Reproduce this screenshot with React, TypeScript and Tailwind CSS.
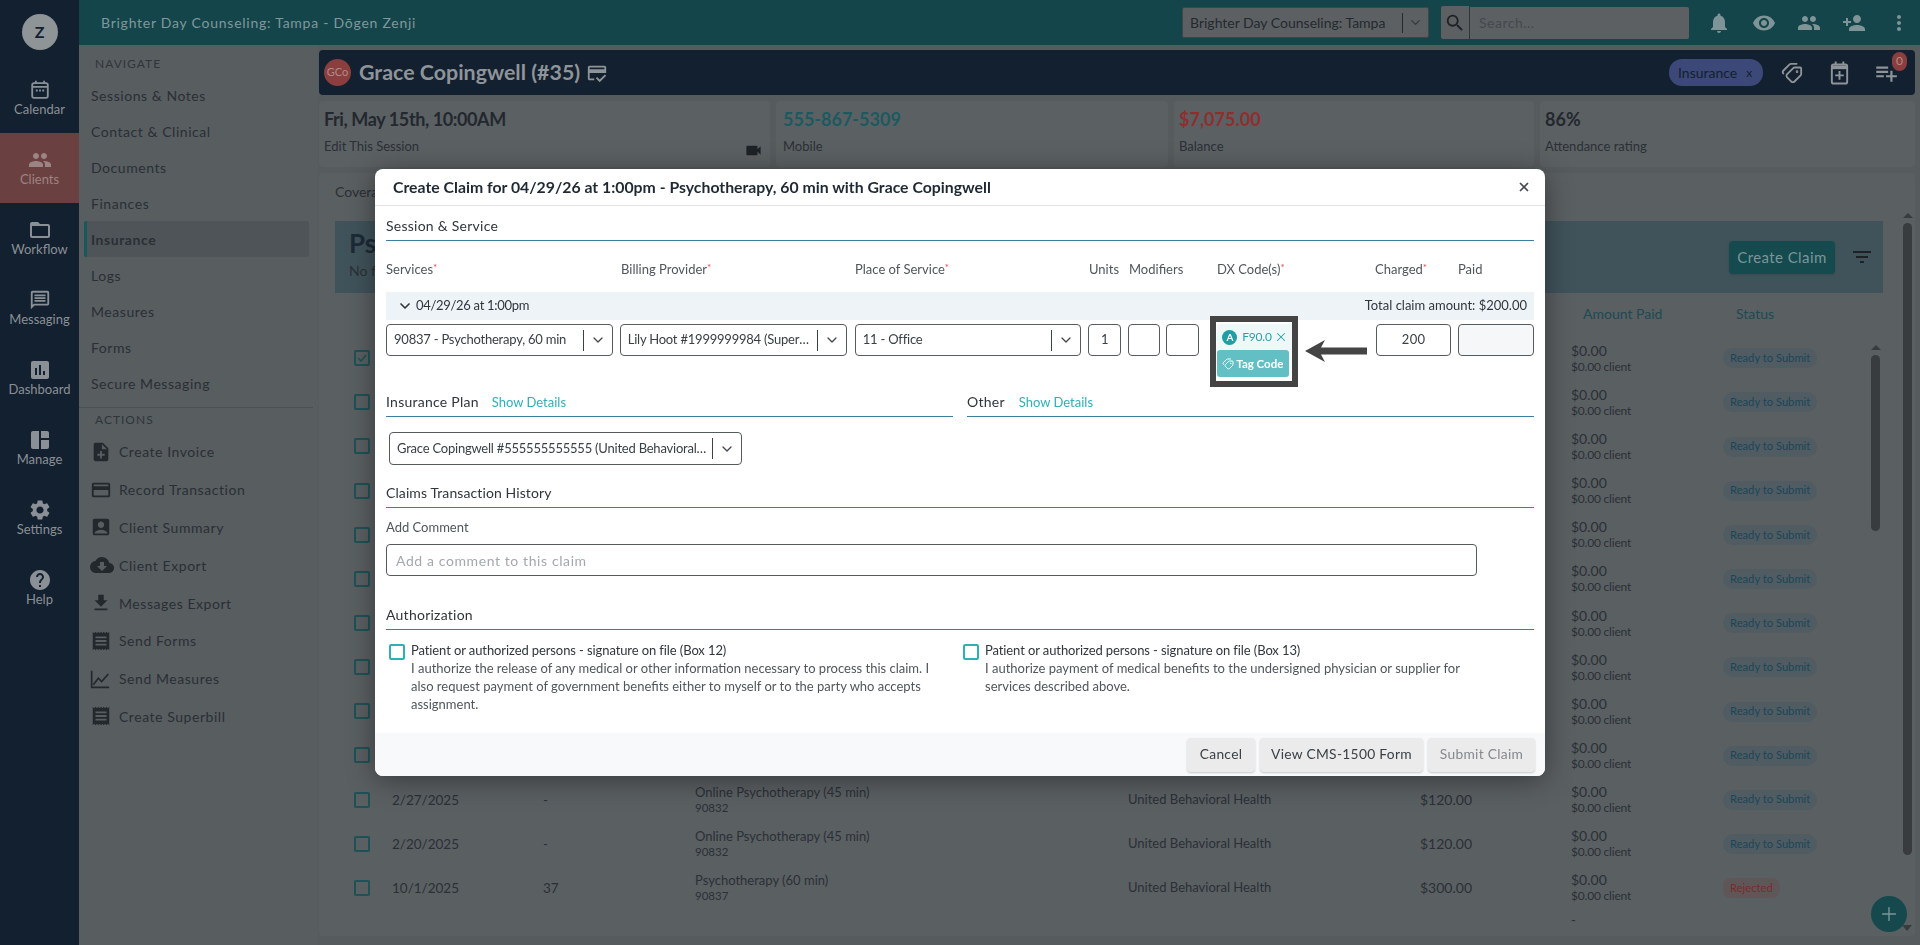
import type { ReactNode } from 'react';
import { ChevronDown, Plus, Tags, X } from 'lucide-react';
import {
    MdAccountBox,
    MdAssessment,
    MdCloudDownload,
    MdCreditCard,
    MdFileDownload,
    MdFilterList,
    MdFolderOpen,
    MdHelp,
    MdMoreVert,
    MdNoteAdd,
    MdNotifications,
    MdOutlineCreditScore,
    MdOutlineMessage,
    MdPeople,
    MdPersonAdd,
    MdPlaylistAdd,
    MdReceipt,
    MdRemoveRedEye,
    MdSearch,
    MdSettings,
    MdSpaceDashboard,
    MdVideocam,
} from 'react-icons/md';

function CalendarIcon() {
    return (
        <svg width="22" height="22" viewBox="0 0 24 24" fill="none" stroke="currentColor" strokeWidth="2">
            <rect x="3.5" y="4.5" width="17" height="16" rx="2" />
            <path d="M3.5 8.5h17M7.5 2v3M16.5 2v3" />
            <path d="M7.5 12.5h2M11 12.5h2M14.5 12.5h2" />
        </svg>
    );
}

function ChartIcon() {
    return (
        <svg width="20" height="20" viewBox="0 0 24 24" fill="none" stroke="currentColor" strokeWidth="2">
            <path d="M2 2v20h21" />
            <path d="M4 19l6-8 4 4 8-9" />
        </svg>
    );
}

function CalendarAddIcon() {
    return (
        <svg width="23" height="26" viewBox="0 0 24 26" fill="none" stroke="#8f9498" strokeWidth="2">
            <rect x="4" y="4" width="16" height="20" rx="2" />
            <path d="M4 7h16" strokeWidth="4" />
            <path d="M8 1v3M16 1v3M12 11v9M7.5 15.5h9" />
        </svg>
    );
}

const railItems = [
    { label: 'Calendar', icon: <CalendarIcon /> },
    { label: 'Clients', icon: <MdPeople size={24} />, active: true },
    { label: 'Workflow', icon: <MdFolderOpen size={24} /> },
    { label: 'Messaging', icon: <MdOutlineMessage size={22} /> },
    { label: 'Dashboard', icon: <MdAssessment size={24} /> },
    { label: 'Manage', icon: <MdSpaceDashboard size={24} /> },
    { label: 'Settings', icon: <MdSettings size={24} /> },
    { label: 'Help', icon: <MdHelp size={24} /> },
];

const navItems = ['Sessions & Notes', 'Contact & Clinical', 'Documents', 'Finances', 'Insurance', 'Logs', 'Measures', 'Forms', 'Secure Messaging'];

const actionItems = [
    { label: 'Create Invoice', icon: <MdNoteAdd size={22} /> },
    { label: 'Record Transaction', icon: <MdCreditCard size={22} /> },
    { label: 'Client Summary', icon: <MdAccountBox size={22} /> },
    { label: 'Client Export', icon: <MdCloudDownload size={24} /> },
    { label: 'Messages Export', icon: <MdFileDownload size={22} /> },
    { label: 'Send Forms', icon: <MdReceipt size={22} /> },
    { label: 'Send Measures', icon: <ChartIcon /> },
    { label: 'Create Superbill', icon: <MdReceipt size={22} /> },
];

const rows = [
    { date: '5/1/2025', session: '41', service: 'Psychotherapy (60 min)', code: '90837', charged: '$200.00', status: 'Ready to Submit', checked: true },
    { date: '4/24/2025', session: '40', service: 'Psychotherapy (60 min)', code: '90837', charged: '$200.00', status: 'Ready to Submit' },
    { date: '4/17/2025', session: '39', service: 'Psychotherapy (60 min)', code: '90837', charged: '$200.00', status: 'Ready to Submit' },
    { date: '4/10/2025', session: '38', service: 'Psychotherapy (60 min)', code: '90837', charged: '$200.00', status: 'Ready to Submit' },
    { date: '4/3/2025', session: '-', service: 'Online Psychotherapy (45 min)', code: '90832', charged: '$120.00', status: 'Ready to Submit' },
    { date: '3/27/2025', session: '-', service: 'Online Psychotherapy (45 min)', code: '90832', charged: '$120.00', status: 'Ready to Submit' },
    { date: '3/20/2025', session: '-', service: 'Online Psychotherapy (45 min)', code: '90832', charged: '$120.00', status: 'Ready to Submit' },
    { date: '3/13/2025', session: '-', service: 'Online Psychotherapy (45 min)', code: '90832', charged: '$120.00', status: 'Ready to Submit' },
    { date: '3/6/2025', session: '-', service: 'Online Psychotherapy (45 min)', code: '90832', charged: '$120.00', status: 'Ready to Submit' },
    { date: '3/4/2025', session: '-', service: 'Online Psychotherapy (45 min)', code: '90832', charged: '$120.00', status: 'Ready to Submit' },
    { date: '2/27/2025', session: '-', service: 'Online Psychotherapy (45 min)', code: '90832', charged: '$120.00', status: 'Ready to Submit' },
    { date: '2/20/2025', session: '-', service: 'Online Psychotherapy (45 min)', code: '90832', charged: '$120.00', status: 'Ready to Submit' },
    { date: '10/1/2025', session: '37', service: 'Psychotherapy (60 min)', code: '90837', charged: '$300.00', status: 'Rejected' },
];

function Rail() {
    return (
        <div className="w-[79px] shrink-0 bg-[#13202f] flex flex-col text-[13px] text-[#8a9096]">
            <div className="h-[63px] pt-[14px] flex justify-center">
                <div className="w-9 h-9 rounded-full bg-[#8f9497] flex items-center justify-center text-[#13202f] font-bold text-[16px]">Z</div>
            </div>
            {railItems.map(item => (
                <div key={item.label} className={`h-[70px] pt-[15px] flex flex-col items-center ${item.active ? 'bg-[#6b4040] text-[#9b8484]' : ''}`}>
                    <div className="h-[24px] flex items-center">{item.icon}</div>
                    <span className="leading-[17px] mt-[-1px]">{item.label}</span>
                </div>
            ))}
        </div>
    );
}

function SideNav() {
    return (
        <div className="w-[239px] shrink-0 bg-[#585d60] pt-[45px] text-[14px] tracking-[0.55px] text-[#2a2f35]">
            <div className="pl-[16px] h-[32px] pt-[10px] text-[12px] tracking-[1px] text-[#2f353b]">NAVIGATE</div>
            <div className="pl-[5px] pr-[9px]">
                {navItems.map(item => (
                    <div
                        key={item}
                        className={`h-[36px] flex items-center rounded-[2px] ${
                            item === 'Insurance' ? 'bg-[#4f5458] border-l-[3px] border-[#17585c] pl-[4px] font-bold' : 'pl-[7px]'
                        }`}
                    >
                        {item}
                    </div>
                ))}
            </div>
            <div className="mt-[6px] mr-[5px] border-t border-[#4b5054]" />
            <div className="pl-[16px] h-[25px] pt-[3px] text-[12px] tracking-[1px] text-[#2f353b]">ACTIONS</div>
            {actionItems.map(item => (
                <div key={item.label} className="h-[37.8px] flex items-center pl-[11px]">
                    <div className="w-[29px] flex justify-start text-[#23282d]">{item.icon}</div>
                    <span>{item.label}</span>
                </div>
            ))}
        </div>
    );
}

function TopBar() {
    return (
        <div className="absolute left-[79px] right-0 top-0 h-[45px] bg-[#14454b] flex items-center pl-[22px] text-[#80989b]">
            <span className="text-[14px] tracking-[0.75px] flex-1">Brighter Day Counseling: Tampa - Dōgen Zenji</span>
            <div className="w-[247px] h-[31px] bg-[#5c6063] rounded-[2px] flex items-center text-[14px] text-[#24292e] pl-[7px] border border-[#3f4548]">
                <span className="flex-1 whitespace-nowrap">Brighter Day Counseling: Tampa</span>
                <div className="w-px h-[20px] bg-[#24292e]" />
                <ChevronDown size={15} className="mx-[5px] text-[#34393d]" />
            </div>
            <div className="ml-[12px] w-[28px] h-[33px] bg-[#5c6063] rounded-l-[2px] flex items-center justify-center text-[#1d2226]">
                <MdSearch size={22} />
            </div>
            <div className="w-[220px] h-[32px] bg-[#5c6063] border-l border-[#2f3438] rounded-r-[2px] flex items-center pl-[9px] text-[14px] text-[#44494d] tracking-[0.5px]">Search...</div>
            <div className="flex items-center text-[#7f9496] ml-[7px] mr-[-1px]">
                <div className="w-[45px] flex justify-center"><MdNotifications size={24} /></div>
                <div className="w-[45px] flex justify-center"><MdRemoveRedEye size={24} /></div>
                <div className="w-[45px] flex justify-center"><MdPeople size={24} /></div>
                <div className="w-[45px] flex justify-center"><MdPersonAdd size={24} /></div>
                <div className="w-[45px] flex justify-center"><MdMoreVert size={24} /></div>
            </div>
        </div>
    );
}

function ClientHeader() {
    return (
        <div className="h-[45px] rounded-[4px] bg-[#13202f] flex items-center pl-[5px] pr-[16px]">
            <div className="w-[27px] h-[27px] rounded-full bg-[#8a3e3e] text-[#b08a8a] text-[11px] flex items-center justify-center">GCo</div>
            <span className="ml-[8px] text-[21.4px] font-bold text-[#8f9498] leading-none">Grace Copingwell (#35)</span>
            <MdOutlineCreditScore size={22} className="ml-[6px] text-[#8f9498]" />
            <div className="flex-1" />
            <div className="h-[27px] w-[94px] rounded-[13px] bg-[#3c4877] text-[#13202f] text-[14px] flex items-center pl-[9px] gap-[9px]">
                <span>Insurance</span>
                <span className="text-[12px]">x</span>
            </div>
            <Tags size={22} className="ml-[18px] text-[#8f9498] rotate-90" />
            <div className="ml-[25px]"><CalendarAddIcon /></div>
            <div className="relative ml-[22px]">
                <MdPlaylistAdd size={26} className="text-[#8f9498]" />
                <span className="absolute -top-[8px] -right-[8px] w-[15px] h-[19px] rounded-full bg-[#8a3e3e] text-[#b08a8a] text-[12px] flex items-center justify-center">0</span>
            </div>
        </div>
    );
}

function InfoCard({ title, sub, className, titleClass, right }: { title: string; sub: string; className: string; titleClass: string; right?: ReactNode }) {
    return (
        <div className={`${className} h-[66px] rounded-[4px] bg-[#5b6063] pt-[6px] relative`}>
            <div className={`text-[18px] font-bold leading-[24px] ${titleClass}`}>{title}</div>
            <div className="text-[13px] leading-[16px] mt-[7px] text-[#2b3036]">{sub}</div>
            {right}
        </div>
    );
}

function Checkbox({ checked }: { checked?: boolean }) {
    return (
        <div className="w-[16px] h-[16px] rounded-[2px] border-2 border-[#1d5257] flex items-center justify-center">
            {checked && (
                <svg width="12" height="12" viewBox="0 0 12 12" fill="none" stroke="#1d5257" strokeWidth="1.6">
                    <path d="M2 6l3 3 5-6" />
                </svg>
            )}
        </div>
    );
}

function ClaimsTable() {
    return (
        <div className="relative h-[600px] overflow-hidden text-[13px] text-[#2b3036]">
            {rows.map(row => (
                <div key={row.date} className="h-[44.17px] grid grid-cols-[57px_151px_152px_433px_292px_151px_152px_1fr] items-center">
                    <div className="pl-[19px]"><Checkbox checked={row.checked} /></div>
                    <div className="text-[13.5px]">{row.date}</div>
                    <div className="text-[13.5px]">{row.session}</div>
                    <div>
                        <div className="text-[13px] leading-[16px]">{row.service}</div>
                        <div className="text-[11.5px] leading-[15px]">{row.code}</div>
                    </div>
                    <div className="text-[13px]">United Behavioral Health</div>
                    <div className="text-[14px]">{row.charged}</div>
                    <div>
                        <div className="text-[14px] leading-[16px]">$0.00</div>
                        <div className="text-[12px] leading-[15px] tracking-[-0.2px]">$0.00 client</div>
                    </div>
                    <div>
                        {row.status === 'Rejected' ? (
                            <span className="inline-flex h-[20px] items-center px-[7px] rounded-[8px] bg-[#5f5657] text-[#792c2c] text-[11.2px] whitespace-nowrap">Rejected</span>
                        ) : (
                            <span className="inline-flex h-[20px] items-center px-[7px] rounded-[10px] bg-[#505c62] text-[#1b4658] text-[11.2px] whitespace-nowrap">{row.status}</span>
                        )}
                    </div>
                </div>
            ))}
        </div>
    );
}

function Scrollbar({ x, y, height }: { x: string; y: string; height: string }) {
    return (
        <div className={`absolute ${x} ${y} ${height} w-[9px] rounded-[5px] bg-[#383c3f]`}>
            <div className="absolute -top-[10px] left-0 w-0 h-0 border-x-[5px] border-b-[5px] border-x-transparent border-b-[#383c3f]" />
        </div>
    );
}

function MainArea() {
    return (
        <div className="flex-1 pt-[50px] pl-px pr-[5px] flex flex-col text-[#2b3036]">
            <ClientHeader />
            <div className="flex gap-[6px] mt-[6px]">
                <InfoCard
                    title="Fri, May 15th, 10:00AM"
                    sub="Edit This Session"
                    className="w-[451px] px-[5px]"
                    titleClass="text-[#23282e] tracking-[-0.4px]"
                    right={<MdVideocam size={19} className="absolute right-[7px] bottom-[7px] text-[#1d2226]" />}
                />
                <InfoCard title="555-867-5309" sub="Mobile" className="w-[392px] px-[7px]" titleClass="text-[#1b5a60]" />
                <InfoCard title="$7,075.00" sub="Balance" className="w-[360px] px-[5px]" titleClass="text-[#8f2e2e]" />
                <InfoCard title="86%" sub="Attendance rating" className="w-[375px] px-[5px]" titleClass="text-[#23282e]" />
            </div>
            <div className="relative mt-[6px] h-[763px] rounded-[4px] bg-[#5a5f62] pl-[16px] pr-[32px]">
                <div className="h-[48px] pt-[8px] text-[14px]">Coverage</div>
                <div className="h-[72px] bg-[#40535a] pl-[14px] pr-[9px] flex items-center">
                    <div className="flex-1 pb-[5px]">
                        <div className="text-[26px] font-bold leading-[30px] text-[#1d2a36]">Psychotherapy Claims</div>
                        <div className="text-[14px] mt-[2px]">No filters applied</div>
                    </div>
                    <div className="w-[106px] h-[33px] rounded-[4px] bg-[#154a4f] shadow flex items-center justify-center text-[15px] tracking-[0.4px] text-[#7b9699]">Create Claim</div>
                    <MdFilterList size={24} className="ml-[15px] text-[#1d2226]" />
                </div>
                <div className="h-[43px] grid grid-cols-[57px_151px_152px_433px_292px_151px_152px_1fr] items-center pb-[3px] text-[14px] text-[#1e4a52]">
                    <div />
                    <div>Date</div>
                    <div>Session</div>
                    <div>Service</div>
                    <div>Payer</div>
                    <div>Charged</div>
                    <div className="pl-[12px]">Amount Paid</div>
                    <div className="pl-[13px]">Status</div>
                </div>
                <ClaimsTable />
                <span className="absolute left-[1252px] top-[742px] text-[13px] leading-[10px]">-</span>
                <Scrollbar x="left-[1552px]" y="top-[182px]" height="h-[176px]" />
                <Scrollbar x="left-[1584px]" y="top-[50px]" height="h-[632px]" />
                <div className="absolute left-[1583px] top-[752px] w-0 h-0 border-x-[5px] border-t-[6px] border-x-transparent border-t-[#383c3f] z-10" />
                <div className="absolute left-[1552px] top-[723px] w-[36px] h-[36px] rounded-full bg-[#15494e] flex items-center justify-center text-[#7b9699]">
                    <Plus size={22} strokeWidth={1.5} />
                </div>
            </div>
        </div>
    );
}

function Required() {
    return <sup className="text-[#e5484d] text-[10px] top-[-3px]">*</sup>;
}

function SectionTitle({ children, className }: { children: ReactNode; className: string }) {
    return <div className={`border-b border-[#3b7f9e] flex items-end pb-[4px] text-[14px] tracking-[0.25px] text-[#30363c] ${className}`}>{children}</div>;
}

function SelectBox({ text, className }: { text: string; className: string }) {
    return (
        <div className={`border border-[#555a5e] rounded-[4px] flex items-center pl-[7px] text-[13px] tracking-[-0.22px] text-[#3a4046] ${className}`}>
            <span className="flex-1 truncate pr-[3px]">{text}</span>
            <div className="w-px h-[21px] bg-[#3a4046]" />
            <ChevronDown size={16} strokeWidth={2} className="mx-[6px] text-[#454a4f]" />
        </div>
    );
}

function AuthBlock({ title, body }: { title: string; body: string }) {
    return (
        <div className="flex gap-[6px] pr-[20px]">
            <div className="w-[16px] h-[16px] mt-[3px] shrink-0 rounded-[2px] border-2 border-[#2fb0b4]" />
            <div>
                <div className="text-[#30363c] tracking-[-0.1px]">{title}</div>
                <div className="text-[#50565c]">{body}</div>
            </div>
        </div>
    );
}

function ClaimModal() {
    return (
        <div className="fixed inset-0 flex items-start justify-center pt-[169px]">
            <div className="w-[1170px] h-[607px] rounded-[8px] bg-white shadow-[0_4px_28px_rgba(0,0,0,0.4)] flex flex-col overflow-hidden text-[#3a4046]">
                <div className="h-[37px] shrink-0 border-b border-[#dfe2e5] flex items-center pl-[18px] pr-[14px]">
                    <span className="flex-1 text-[15.8px] font-bold text-[#1f2933]">Create Claim for 04/29/26 at 1:00pm - Psychotherapy, 60 min with Grace Copingwell</span>
                    <X size={14} strokeWidth={3} className="text-[#454a50]" />
                </div>
                <div className="flex-1 px-[11px]">
                    <SectionTitle className="h-[35px]">Session &amp; Service</SectionTitle>
                    <div className="h-[51px] pt-[20px] text-[13px] leading-[16px] grid grid-cols-[235px_234px_234px_40px_88px_158px_83px_76px] text-[#50565c]">
                        <div>Services<Required /></div>
                        <div>Billing Provider<Required /></div>
                        <div>Place of Service<Required /></div>
                        <div>Units</div>
                        <div>Modifiers</div>
                        <div>DX Code(s)<Required /></div>
                        <div>Charged<Required /></div>
                        <div>Paid</div>
                    </div>
                    <div className="h-[28px] bg-[#eef3f7] flex items-center justify-between pl-[11px] pr-[7px] text-[13px] text-[#30363c]">
                        <span className="flex items-center gap-[3px] tracking-[-0.3px]"><ChevronDown size={16} strokeWidth={2.5} />04/29/26 at 1:00pm</span>
                        <span>Total claim amount: $200.00</span>
                    </div>
                    <div className="relative mt-[4px] h-[53px] flex items-start text-[13px]">
                        <SelectBox text="90837 - Psychotherapy, 60 min" className="w-[227px] h-[32px]" />
                        <SelectBox text="Lily Hoot #1999999984 (Supervising)" className="w-[227px] h-[32px] ml-[7px]" />
                        <SelectBox text="11 - Office" className="w-[227px] h-[32px] ml-[8px]" />
                        <div className="w-[33px] h-[32px] ml-[7px] border border-[#555a5e] rounded-[4px] flex items-center justify-center">1</div>
                        <div className="w-[32px] h-[32px] ml-[7px] border border-[#555a5e] rounded-[4px]" />
                        <div className="w-[33px] h-[32px] ml-[6px] border border-[#555a5e] rounded-[4px]" />
                        <div className="w-[75px] ml-[18px]">
                            <div className="h-[26px] bg-[#eef8f8] flex items-center pl-[5px] text-[#2aa3a8] text-[12px] tracking-[-0.2px]">
                                <span className="w-[15px] h-[15px] rounded-full bg-[#1f9ea3] text-white text-[10px] font-bold flex items-center justify-center">A</span>
                                <span className="ml-[5px] flex-1">F90.0</span>
                                <X size={14} strokeWidth={1.8} className="mr-[4px]" />
                            </div>
                            <div className="w-[72px] h-[27px] rounded-[3px] bg-[#62bfc3] text-white text-[11.5px] font-bold flex items-center pl-[5px] gap-[2px]">
                                <Tags size={12} className="rotate-90 shrink-0" />
                                Tag Code
                            </div>
                        </div>
                        <div className="w-[75px] h-[32px] ml-[84px] border border-[#555a5e] rounded-[4px] flex items-center justify-center tracking-[0.4px]">200</div>
                        <div className="w-[76px] h-[32px] ml-[7px] border border-[#555a5e] rounded-[4px] bg-[#f5f7f9]" />
                        <div className="absolute left-[824px] top-[-8px] w-[88px] h-[71px] border-[6px] border-[#444444]" />
                        <svg className="absolute left-[919px] top-[16px]" width="62" height="22" viewBox="0 0 62 22" fill="#444444">
                            <path d="M0 11L20 0 16 7.5H62V14.5H16L20 22Z" />
                        </svg>
                    </div>
                    <div className="grid grid-cols-[567px_567px] gap-[14px]">
                        <SectionTitle className="h-[40px]">
                            <span>Insurance Plan</span>
                            <span className="ml-[13px] text-[13px] tracking-normal text-[#2fb0b4]">Show Details</span>
                        </SectionTitle>
                        <SectionTitle className="h-[40px]">
                            <span>Other</span>
                            <span className="ml-[14px] text-[13px] tracking-normal text-[#2fb0b4]">Show Details</span>
                        </SectionTitle>
                    </div>
                    <SelectBox text="Grace Copingwell #555555555555 (United Behavioral Health)" className="w-[353px] h-[33px] mt-[15px] ml-[3px]" />
                    <SectionTitle className="h-[43px]"><span className="tracking-[0.1px]">Claims Transaction History</span></SectionTitle>
                    <div className="h-[36px] pt-[4px] flex items-center text-[13px] text-[#50565c]">Add Comment</div>
                    <div className="w-[1091px] h-[32px] border border-[#555a5e] rounded-[4px] flex items-center pl-[9px] text-[14px] tracking-[0.6px] text-[#a3a8ad]">Add a comment to this claim</div>
                    <SectionTitle className="h-[54px]">Authorization</SectionTitle>
                    <div className="grid grid-cols-[574px_560px] pt-[11px] pl-[3px] text-[13px] leading-[18px]">
                        <AuthBlock
                            title="Patient or authorized persons - signature on file (Box 12)"
                            body="I authorize the release of any medical or other information necessary to process this claim. I also request payment of government benefits either to myself or to the party who accepts assignment."
                        />
                        <AuthBlock
                            title="Patient or authorized persons - signature on file (Box 13)"
                            body="I authorize payment of medical benefits to the undersigned physician or supplier for services described above."
                        />
                    </div>
                </div>
                <div className="h-[43px] shrink-0 bg-[#f7f9fb] flex items-center justify-end gap-[5px] pr-[10px] text-[13.8px] tracking-[0.3px]">
                    <div className="h-[34px] w-[68px] rounded-[4px] bg-[#ebebeb] shadow-[0_1px_2px_rgba(0,0,0,0.2)] flex items-center justify-center">Cancel</div>
                    <div className="h-[34px] w-[163px] rounded-[4px] bg-[#ebebeb] shadow-[0_1px_2px_rgba(0,0,0,0.2)] flex items-center justify-center">View CMS-1500 Form</div>
                    <div className="h-[34px] w-[107px] rounded-[4px] bg-[#ebebeb] shadow-[0_1px_2px_rgba(0,0,0,0.2)] flex items-center justify-center text-[#85898d]">Submit Claim</div>
                </div>
            </div>
        </div>
    );
}

export default function App() {
    return (
        <div className="relative h-screen w-full overflow-hidden flex bg-[#565b5e] [font-family:Lato,'Noto_Sans',sans-serif]">
            <Rail />
            <SideNav />
            <MainArea />
            <TopBar />
            <ClaimModal />
        </div>
    );
}
